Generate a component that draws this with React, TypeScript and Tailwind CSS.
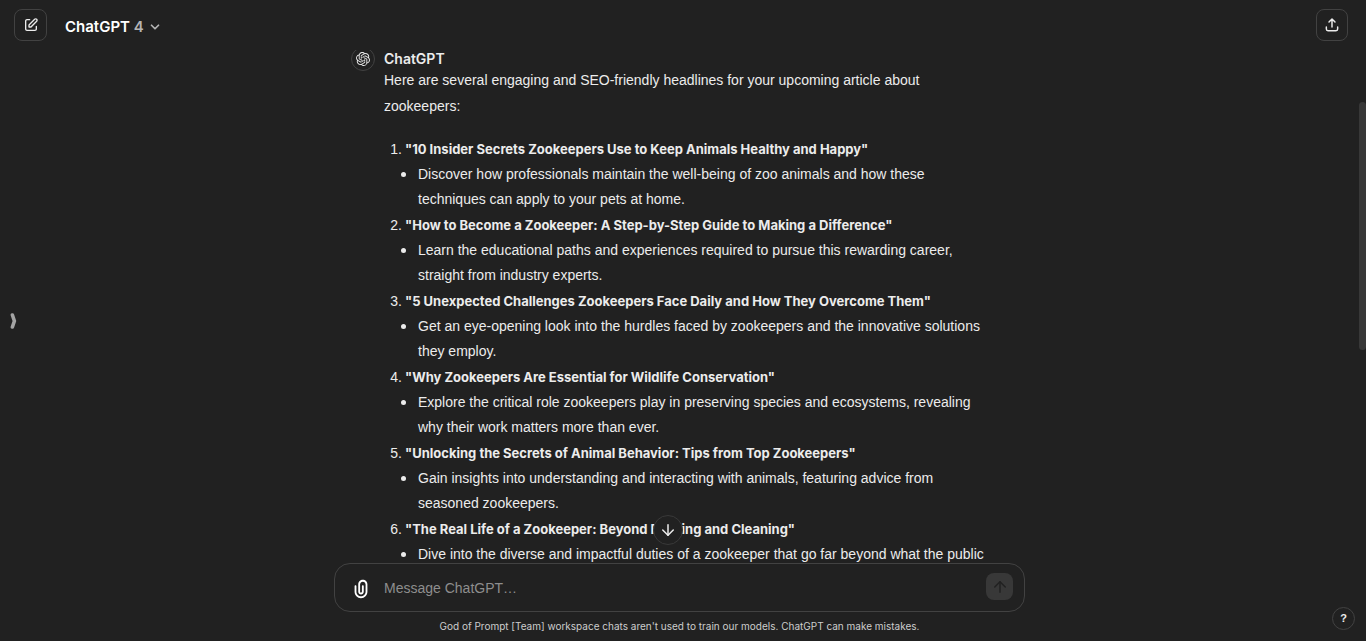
import { ArrowDown, ArrowUp, ChevronDown } from "lucide-react";
import { SiOpenai } from "react-icons/si";

type Headline = { title: string; lines: string[] };

const headlines: Headline[] = [
  {
    title: '"10 Insider Secrets Zookeepers Use to Keep Animals Healthy and Happy"',
    lines: [
      "Discover how professionals maintain the well-being of zoo animals and how these",
      "techniques can apply to your pets at home.",
    ],
  },
  {
    title: '"How to Become a Zookeeper: A Step-by-Step Guide to Making a Difference"',
    lines: [
      "Learn the educational paths and experiences required to pursue this rewarding career,",
      "straight from industry experts.",
    ],
  },
  {
    title: '"5 Unexpected Challenges Zookeepers Face Daily and How They Overcome Them"',
    lines: [
      "Get an eye-opening look into the hurdles faced by zookeepers and the innovative solutions",
      "they employ.",
    ],
  },
  {
    title: '"Why Zookeepers Are Essential for Wildlife Conservation"',
    lines: [
      "Explore the critical role zookeepers play in preserving species and ecosystems, revealing",
      "why their work matters more than ever.",
    ],
  },
  {
    title: '"Unlocking the Secrets of Animal Behavior: Tips from Top Zookeepers"',
    lines: [
      "Gain insights into understanding and interacting with animals, featuring advice from",
      "seasoned zookeepers.",
    ],
  },
  {
    title: '"The Real Life of a Zookeeper: Beyond Feeding and Cleaning"',
    lines: ["Dive into the diverse and impactful duties of a zookeeper that go far beyond what the public"],
  },
];

function ComposeIcon() {
  return (
    <svg viewBox="0 0 24 24" className="size-4" fill="currentColor" fillRule="evenodd" aria-hidden="true">
      <path d="M16.7929 2.79289C18.0118 1.57394 19.9882 1.57394 21.2071 2.79289C22.4261 4.01184 22.4261 5.98815 21.2071 7.20711L12.7071 15.7071C12.5196 15.8946 12.2652 16 12 16H9C8.44772 16 8 15.5523 8 15V12C8 11.7348 8.10536 11.4804 8.29289 11.2929L16.7929 2.79289ZM19.7929 4.20711C19.355 3.7692 18.645 3.7692 18.2071 4.2071L10 12.4142V14H11.5858L19.7929 5.79289C20.2308 5.35499 20.2308 4.64501 19.7929 4.20711ZM6 5C5.44772 5 5 5.44771 5 6V18C5 18.5523 5.44772 19 6 19H18C18.5523 19 19 18.5523 19 18V14C19 13.4477 19.4477 13 20 13C20.5523 13 21 13.4477 21 14V18C21 19.6569 19.6569 21 18 21H6C4.34315 21 3 19.6569 3 18V6C3 4.34314 4.34315 3 6 3H10C10.5523 3 11 3.44771 11 4C11 4.55228 10.5523 5 10 5H6Z" />
    </svg>
  );
}

function ShareIcon() {
  return (
    <svg viewBox="0 0 24 24" className="size-4" fill="none" stroke="currentColor" strokeWidth="2.2" strokeLinecap="round" strokeLinejoin="round" aria-hidden="true">
      <path d="M12 15V3.5M7.5 7.5 12 3l4.500 4.500M3.500 15v3a2.500 2.500 0 0 0 2.500 2.500h12a2.500 2.500 0 0 0 2.500-2.500v-3" />
    </svg>
  );
}

function ClipIcon() {
  return (
    <svg viewBox="0 0 24 24" className="size-[22px]" fill="currentColor" fillRule="evenodd" aria-hidden="true">
      <path d="M9 7C9 4.23858 11.2386 2 14 2C16.7614 2 19 4.23858 19 7V15C19 18.866 15.866 22 12 22C8.13401 22 5 18.866 5 15V9C5 8.44772 5.44772 8 6 8C6.55228 8 7 8.44772 7 9V15C7 17.7614 9.23858 20 12 20C14.7614 20 17 17.7614 17 15V7C17 5.34315 15.6569 4 14 4C12.3431 4 11 5.34315 11 7V15C11 15.5523 11.4477 16 12 16C12.5523 16 13 15.5523 13 15V9C13 8.44772 13.4477 8 14 8C14.5523 8 15 8.44772 15 9V15C15 16.6569 13.6569 18 12 18C10.3431 18 9 16.6569 9 15V7Z" />
    </svg>
  );
}

export default function App() {
  return (
    <div className="relative flex h-screen flex-col overflow-hidden bg-[#212121] font-['Liberation_Sans',Arial,sans-serif] text-sm text-[#ececec]">
      <header className="flex h-[50px] shrink-0 items-center pr-[18px] pl-3.5">
        <button aria-label="New chat" className="flex h-8 w-[33px] items-center justify-center rounded-lg border border-[#424242]">
          <ComposeIcon />
        </button>
        <button className="ml-[18px] flex items-center gap-1 pt-1 font-['Inter',sans-serif] text-[15px] leading-6 font-semibold text-white">
          <span>
            ChatGPT <span className="text-[#b4b4b4]">4</span>
          </span>
          <ChevronDown className="size-3.5 text-[#b4b4b4]" strokeWidth={3} />
        </button>
        <button aria-label="Share" className="ml-auto flex size-8 items-center justify-center rounded-lg border border-[#424242]">
          <ShareIcon />
        </button>
      </header>

      <main className="relative min-h-0 flex-1 overflow-hidden pr-[7px]">
        <article className="mx-auto flex w-full max-w-[691px] gap-[9px] pl-[17px]">
          <div className="-mt-[3px] flex size-6 shrink-0 items-center justify-center rounded-full border border-[#424242]">
            <SiOpenai className="size-3.5" />
          </div>
          <div className="min-w-0 flex-1">
            <h2 className="font-['Inter',sans-serif] leading-[17px] font-semibold text-[#ececec]">ChatGPT</h2>
            <p className="leading-[26px] whitespace-nowrap">
              Here are several engaging and SEO-friendly headlines for your upcoming article about
              <br />
              zookeepers:
            </p>
            <ol className="mt-[18px] space-y-px leading-[25px] whitespace-nowrap">
              {headlines.map((h, i) => (
                <li key={h.title}>
                  <div className="flex gap-[3px]">
                    <span className="w-[18px] shrink-0 text-right">{i + 1}.</span>
                    <strong className="font-['Inter',sans-serif] text-[13px] font-bold">{h.title}</strong>
                  </div>
                  <ul>
                    <li className="flex gap-3 pl-[17px]">
                      <span className="mt-[10px] size-[5px] shrink-0 rounded-full bg-[#ececec]" />
                      <span>
                        {h.lines.map((line) => (
                          <span key={line} className="block">
                            {line}
                          </span>
                        ))}
                      </span>
                    </li>
                  </ul>
                </li>
              ))}
            </ol>
          </div>
        </article>
      </main>

      <footer className="relative shrink-0 pr-[7px]">
        <button
          aria-label="Scroll to bottom"
          className="absolute -top-12 left-1/2 -ml-[30px] flex size-[30px] items-center justify-center rounded-full border border-[#393939] bg-[#212121]"
        >
          <ArrowDown className="size-[18px]" />
        </button>
        <form className="mx-auto flex h-[49px] w-full max-w-[691px] items-center rounded-2xl border border-[#424242] pr-[11px] pl-[15px]">
          <button type="button" aria-label="Attach files" className="mt-0.5 text-white">
            <ClipIcon />
          </button>
          <input
            aria-label="Message ChatGPT"
            placeholder="Message ChatGPT…"
            className="ml-3 min-w-0 flex-1 bg-transparent leading-6 outline-none placeholder:text-[#8e8e8e]"
          />
          <button type="button" aria-label="Send message" className="mb-0.5 flex size-[27px] items-center justify-center rounded-lg bg-[#383838] text-[#212121]">
            <ArrowUp className="size-[18px]" />
          </button>
        </form>
        <p className="h-[29px] pt-1.5 text-center font-['Inter',sans-serif] text-[10px] leading-4 text-[#cdcdcd]">
          God of Prompt [Team] workspace chats aren't used to train our models. ChatGPT can make mistakes.
        </p>
        <button
          aria-label="Help"
          className="absolute right-[11px] bottom-[11px] flex size-[23px] items-center justify-center rounded-full border border-[#424242] text-[11px] font-bold"
        >
          ?
        </button>
      </footer>

      <button aria-label="Open sidebar" className="absolute top-1/2 left-[10px] -mt-2 text-[#a4a4a4]">
        <svg viewBox="0 0 7 16" className="h-4 w-[7px]" fill="none" stroke="currentColor" strokeWidth="3.600" strokeLinecap="round" strokeLinejoin="round" aria-hidden="true">
          <path d="M2.400 2 4.400 8 2.400 14" />
        </svg>
      </button>
      <div className="absolute top-[102px] right-0 h-[248px] w-[7px] rounded-full bg-[#383838]" />
    </div>
  );
}
